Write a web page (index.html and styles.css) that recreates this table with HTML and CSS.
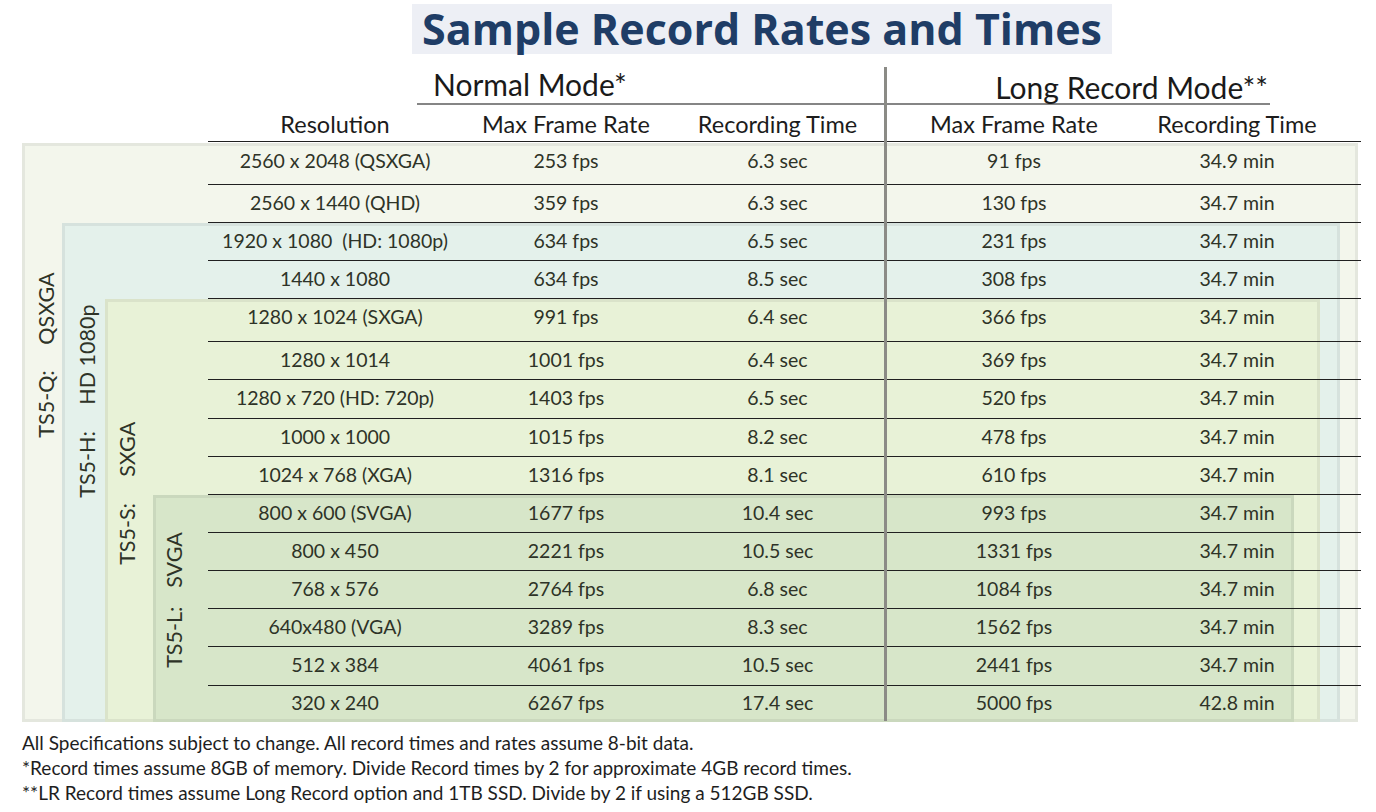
FILE: index.html
```html
<!DOCTYPE html>
<html>
<head>
<meta charset="utf-8">
<link rel="stylesheet" href="styles.css">
</head>
<body>
<div class="page">
  <div class="title-band"><h1 class="title">Sample Record Rates and Times</h1></div>
  <div class="modes">
    <div class="mode mode-normal">Normal Mode*</div>
    <div class="mode mode-long">Long Record Mode**</div>
  </div>
  <div class="row head-row">
    <div class="c">Resolution</div><div class="c">Max Frame Rate</div><div class="c">Recording Time</div><div class="c">Max Frame Rate</div><div class="c">Recording Time</div><div></div>
  </div>

  <div class="box box-q">
    <div class="lab-col lab-col-q"><div class="label label-q"><span>TS5-Q:</span><span class="lab-b">QSXGA</span></div></div>
    <div class="box-body">
      <div class="row in-q r42"><div class="c">2560 x 2048 (QSXGA)</div><div class="c">253 fps</div><div class="c">6.3 sec</div><div class="c">91 fps</div><div class="c">34.9 min</div><div></div></div>
      <div class="row in-q"><div class="c">2560 x 1440 (QHD)</div><div class="c">359 fps</div><div class="c">6.3 sec</div><div class="c">130 fps</div><div class="c">34.7 min</div><div></div></div>

      <div class="box box-h">
        <div class="lab-col lab-col-h"><div class="label label-h"><span>TS5-H:</span><span class="lab-b">HD 1080p</span></div></div>
        <div class="box-body">
          <div class="row in-h"><div class="c">1920 x 1080&nbsp; (HD: 1080p)</div><div class="c">634 fps</div><div class="c">6.5 sec</div><div class="c">231 fps</div><div class="c">34.7 min</div><div></div></div>
          <div class="row in-h"><div class="c">1440 x 1080</div><div class="c">634 fps</div><div class="c">8.5 sec</div><div class="c">308 fps</div><div class="c">34.7 min</div><div></div></div>

          <div class="box box-s">
            <div class="lab-col lab-col-s"><div class="label label-s"><span>TS5-S:</span><span class="lab-b">SXGA</span></div></div>
            <div class="box-body">
              <div class="row in-s r43"><div class="c">1280 x 1024 (SXGA)</div><div class="c">991 fps</div><div class="c">6.4 sec</div><div class="c">366 fps</div><div class="c">34.7 min</div><div></div></div>
              <div class="row in-s"><div class="c">1280 x 1014</div><div class="c">1001 fps</div><div class="c">6.4 sec</div><div class="c">369 fps</div><div class="c">34.7 min</div><div></div></div>
              <div class="row in-s r39"><div class="c">1280 x 720 (HD: 720p)</div><div class="c">1403 fps</div><div class="c">6.5 sec</div><div class="c">520 fps</div><div class="c">34.7 min</div><div></div></div>
              <div class="row in-s"><div class="c">1000 x 1000</div><div class="c">1015 fps</div><div class="c">8.2 sec</div><div class="c">478 fps</div><div class="c">34.7 min</div><div></div></div>
              <div class="row in-s"><div class="c">1024 x 768 (XGA)</div><div class="c">1316 fps</div><div class="c">8.1 sec</div><div class="c">610 fps</div><div class="c">34.7 min</div><div></div></div>

              <div class="box box-l">
                <div class="lab-col lab-col-l"><div class="label label-l"><span>TS5-L:</span><span class="lab-b lab-b-l">SVGA</span></div></div>
                <div class="box-body">
                  <div class="row in-l"><div class="c">800 x 600 (SVGA)</div><div class="c">1677 fps</div><div class="c">10.4 sec</div><div class="c">993 fps</div><div class="c">34.7 min</div><div></div></div>
                  <div class="row in-l"><div class="c">800 x 450</div><div class="c">2221 fps</div><div class="c">10.5 sec</div><div class="c">1331 fps</div><div class="c">34.7 min</div><div></div></div>
                  <div class="row in-l"><div class="c">768 x 576</div><div class="c">2764 fps</div><div class="c">6.8 sec</div><div class="c">1084 fps</div><div class="c">34.7 min</div><div></div></div>
                  <div class="row in-l"><div class="c">640x480 (VGA)</div><div class="c">3289 fps</div><div class="c">8.3 sec</div><div class="c">1562 fps</div><div class="c">34.7 min</div><div></div></div>
                  <div class="row in-l r39"><div class="c">512 x 384</div><div class="c">4061 fps</div><div class="c">10.5 sec</div><div class="c">2441 fps</div><div class="c">34.7 min</div><div></div></div>
                  <div class="row in-l r-last"><div class="c">320 x 240</div><div class="c">6267 fps</div><div class="c">17.4 sec</div><div class="c">5000 fps</div><div class="c">42.8 min</div><div></div></div>
                </div>
              </div>
            </div>
          </div>
        </div>
      </div>
    </div>
  </div>

  <div class="divider"></div>

  <div class="notes">
    <p>All Specifications subject to change. All record times and rates assume 8-bit data.</p>
    <p>*Record times assume 8GB of memory. Divide Record times by 2 for approximate 4GB record times.</p>
    <p>**LR Record times assume Long Record option and 1TB SSD. Divide by 2 if using a 512GB SSD.</p>
  </div>
</div>
</body>
</html>
```

FILE: styles.css
```css
* { box-sizing: border-box; }
body {
  margin: 0;
  background: #ffffff;
  font-family: Lato, "Open Sans", sans-serif;
  color: #2e3327;
}
.page {
  position: relative;
  width: 1376px;
  height: 812px;
  overflow: hidden;
}
.title-band {
  margin: 4px 0 0 412px;
  width: 700px;
  height: 50px;
  background: #edeff5;
  display: flex;
  align-items: center;
  justify-content: center;
}
.title {
  margin: 0;
  font-family: "Open Sans", sans-serif;
  font-weight: 700;
  font-size: 43px;
  line-height: 50px;
  height: 50px;
  color: #1f3d66;
  white-space: nowrap;
}
.modes {
  display: flex;
  margin: 13px 0 0 417px;
  width: 853px;
  height: 38px;
  border-bottom: 2px solid #858585;
  color: #1a1a1a;
}
.mode {
  font-size: 30px;
  line-height: 32px;
  white-space: nowrap;
}
.mode-normal {
  width: 468px;
  padding-left: 16px;
  padding-top: 1px;
}
.mode-long {
  flex: 1;
  text-align: right;
  padding-right: 2px;
  padding-top: 4px;
}
.row {
  display: grid;
  grid-template-columns: 254px 208px 215px 258px 188px 1fr;
  height: 38px;
  border-bottom: 1px solid #202020;
  font-size: 19.5px;
  white-space: nowrap;
}
.row .c {
  display: flex;
  align-items: center;
  justify-content: center;
  padding-bottom: 3px;
}
.head-row {
  margin-left: 208px;
  width: 1153px;
  height: 37px;
  font-size: 23.5px;
  color: #1c1c1c;
}
.head-row .c { padding-top: 2px; padding-bottom: 0; }
.r42 { height: 42px; }
.r43 { height: 43px; }
.r39 { height: 39px; }
.r-last { height: 36px; border-bottom: none; }
.row.r42 .c { padding-bottom: 7px; }
.row.r43 .c { padding-bottom: 7px; }

.box {
  display: flex;
  box-shadow: inset 0 0 0 3px rgba(0, 0, 0, 0.06);
}
.box-body {
  flex: 1;
  min-width: 0;
  display: flex;
  flex-direction: column;
}
.box-q {
  margin: 1px 0 0 22px;
  width: 1336px;
  background: #f3f6ec;
}
.box-h { margin-right: 18px; background: #e4f1eb; }
.box-s { margin-right: 20px; background: #e8f2d7; }
.box-l { margin-right: 26px; background: #d7e6c9; }

.in-q { margin-left: 146px; margin-right: -3px; }
.in-h { margin-left: 103px; margin-right: -21px; }
.in-s { margin-left: 55px; margin-right: -41px; }
.in-l { margin-left: 0; margin-right: -67px; }

.lab-col { flex: none; display: flex; flex-direction: column; align-items: flex-start; }
.lab-col-q { width: 40px; }
.lab-col-h { width: 43px; }
.lab-col-s { width: 48px; }
.lab-col-l { width: 55px; }

.label {
  writing-mode: vertical-rl;
  transform: rotate(180deg);
  display: flex;
  font-size: 21.5px;
  line-height: 22px;
  white-space: nowrap;
}
.lab-b { margin-inline-start: 26px; }
.lab-b-l { margin-inline-start: 19px; }
.label-q { margin: 129px 0 0 13px; }
.label-h { margin: 82px 0 0 14px; }
.label-s { margin: 123px 0 0 11px; }
.label-l { margin: 37px 0 0 10px; }

.divider {
  position: absolute;
  left: 884px;
  top: 67px;
  width: 3px;
  height: 654px;
  background: #8b8b86;
}
.notes {
  margin: 8px 0 0 22px;
  font-size: 19px;
  line-height: 25px;
  color: #1e1e1e;
}
.notes p { margin: 0; white-space: nowrap; }
```
